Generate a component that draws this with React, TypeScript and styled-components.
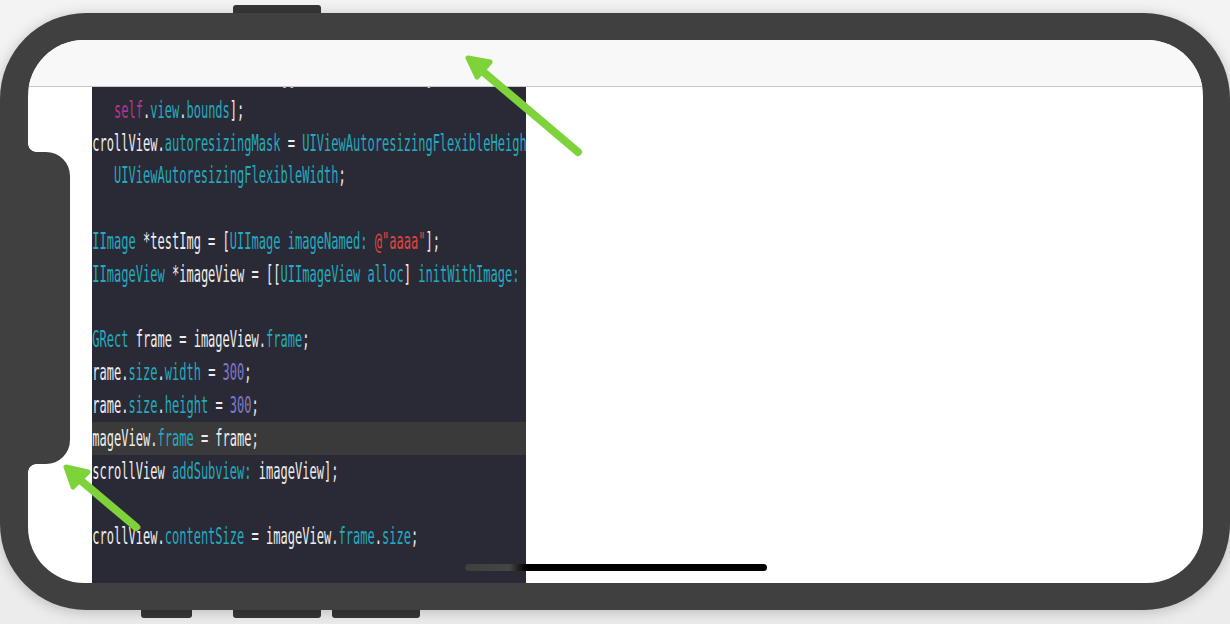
import React, { FC } from 'react'
import styled, { createGlobalStyle } from 'styled-components'

const GlobalStyle = createGlobalStyle`
  html, body {
    margin: 0;
    padding: 0;
    background: #efefef;
    font-family: 'Liberation Sans', Arial, sans-serif;
  }
`

const Stage = styled.div`
  position: relative;
  isolation: isolate;
  width: 1230px;
  height: 624px;
  padding-top: 13px;
  box-sizing: border-box;
  overflow: hidden;
  background: linear-gradient(#f3f3f3, #ececec);
`

const Phone = styled.div`
  position: relative;
  width: 1230px;
  height: 597px;
  box-sizing: border-box;
  padding: 27px 27px 27px 28px;
  background: #404040;
  border-radius: 86px;
  box-shadow: 0 2px 14px rgba(0, 0, 0, 0.22);
`

// volume / power keys peek out from behind the frame
const SideButton = styled.div<{ $left: number; $width: number; $bottom?: boolean }>`
  position: absolute;
  left: ${(p) => p.$left}px;
  width: ${(p) => p.$width}px;
  height: 12px;
  ${(p) => (p.$bottom ? 'bottom: -8px;' : 'top: -8px;')}
  background: #363636;
  border-radius: 3px;
  z-index: -1;
`

const Screen = styled.div`
  position: relative;
  height: 100%;
  display: flex;
  flex-direction: column;
  background: #ffffff;
  border-radius: 56px;
  overflow: hidden;
`

const StatusBar = styled.div`
  height: 47px;
  flex-shrink: 0;
  box-sizing: border-box;
  background: #f8f8f8;
  border-bottom: 1px solid #c6c6c6;
`

const Content = styled.div`
  flex: 1;
  display: flex;
  padding-left: 64px;
  min-height: 0;
`

const CodePanel = styled.div`
  width: 434px;
  background: #292a35;
  overflow: hidden;
`

const Lines = styled.div`
  margin-top: -26px;
  margin-left: -7px;
`

const Line = styled.div<{ $active?: boolean }>`
  height: 32.8px;
  line-height: 32.8px;
  white-space: pre;
  background: ${(p) => (p.$active ? '#3a3a3b' : 'transparent')};
`

const LineText = styled.span`
  display: inline-block;
  font-family: 'DejaVu Sans Mono', 'Liberation Mono', monospace;
  font-size: 23px;
  color: #ececec;
  transform: scaleX(0.523);
  transform-origin: 0 50%;
`

const colors: Record<string, string> = {
  p: '#ededed',
  k: '#26a9bf',
  s: '#b4378f',
  n: '#8077cc',
  r: '#e2453f',
}

const Token = styled.span<{ $kind: string }>`
  color: ${(p) => colors[p.$kind]};
`

const Notch = styled.div`
  position: absolute;
  left: 0;
  top: 112px;
  width: 42px;
  height: 312px;
  background: #404040;
  border-radius: 0 24px 24px 0;

  &::before,
  &::after {
    content: '';
    position: absolute;
    left: 0;
    width: 8px;
    height: 8px;
  }
  &::before {
    top: -8px;
    background: radial-gradient(circle at 100% 0, transparent 7.5px, #404040 8px);
  }
  &::after {
    bottom: -8px;
    background: radial-gradient(circle at 100% 100%, transparent 7.5px, #404040 8px);
  }
`

const HomeIndicator = styled.div`
  position: absolute;
  left: 437px;
  top: 524px;
  width: 302px;
  height: 7px;
  border-radius: 4px;
  background: linear-gradient(to right, #3e403e 0, #444644 45px, #000 61px);
`

const Overlay = styled.svg`
  position: absolute;
  left: 0;
  top: 0;
  pointer-events: none;
`

type Tok = [string, string]

const code: Tok[][] = [
  [['UIScrollView', 'k'], [' *scrollView = [[', 'p'], ['UIScrollView', 'k'], [' alloc', 'k'], ['] ', 'p'], ['initWithFrame:', 'k']],
  [['    ', 'p'], ['self', 's'], ['.', 'p'], ['view', 'k'], ['.', 'p'], ['bounds', 'k'], ['];', 'p']],
  [['scrollView.', 'p'], ['autoresizingMask', 'k'], [' = ', 'p'], ['UIViewAutoresizingFlexibleHeight', 'k'], [' |', 'p']],
  [['    ', 'p'], ['UIViewAutoresizingFlexibleWidth', 'k'], [';', 'p']],
  [],
  [['UIImage', 'k'], [' *testImg = [', 'p'], ['UIImage', 'k'], [' imageNamed:', 'k'], [' ', 'p'], ['@"aaaa"', 'r'], ['];', 'p']],
  [['UIImageView', 'k'], [' *imageView = [[', 'p'], ['UIImageView', 'k'], [' alloc', 'k'], ['] ', 'p'], ['initWithImage:', 'k']],
  [],
  [['CGRect', 'k'], [' frame = imageView.', 'p'], ['frame', 'k'], [';', 'p']],
  [['frame.', 'p'], ['size', 'k'], ['.', 'p'], ['width', 'k'], [' = ', 'p'], ['300', 'n'], [';', 'p']],
  [['frame.', 'p'], ['size', 'k'], ['.', 'p'], ['height', 'k'], [' = ', 'p'], ['300', 'n'], [';', 'p']],
  [['imageView.', 'p'], ['frame', 'k'], [' = frame;', 'p']],
  [['[scrollView ', 'p'], ['addSubview:', 'k'], [' imageView];', 'p']],
  [],
  [['scrollView.', 'p'], ['contentSize', 'k'], [' = imageView.', 'p'], ['frame', 'k'], ['.', 'p'], ['size', 'k'], [';', 'p']],
  [],
]

const ACTIVE_LINE = 11

const Arrow: FC<{ tail: [number, number]; head: [number, number][] }> = ({ tail, head }) => {
  const [tip] = head
  return (
    <g>
      <line x1={tail[0]} y1={tail[1]} x2={tip[0] + 6} y2={tip[1] + 6} stroke="#7ed23a" strokeWidth={8} strokeLinecap="round" />
      <polygon
        points={head.map((p) => p.join(',')).join(' ')}
        fill="#7ed23a"
        stroke="#7ed23a"
        strokeWidth={5}
        strokeLinejoin="round"
      />
    </g>
  )
}

const App: FC = () => {
  return (
    <>
      <GlobalStyle />
      <Stage>
        <Phone>
          <SideButton $left={233} $width={88} />
          <SideButton $bottom $left={141} $width={51} />
          <SideButton $bottom $left={233} $width={88} />
          <SideButton $bottom $left={332} $width={88} />
          <Screen>
            <StatusBar />
            <Content>
              <CodePanel>
                <Lines>
                  {code.map((toks, i) => (
                    <Line key={i} $active={i === ACTIVE_LINE}>
                      <LineText>
                        {toks.length === 0
                          ? ' '
                          : toks.map(([t, k], j) => (
                              <Token key={j} $kind={k}>
                                {t}
                              </Token>
                            ))}
                      </LineText>
                    </Line>
                  ))}
                </Lines>
              </CodePanel>
            </Content>
            <Notch />
            <HomeIndicator />
          </Screen>
        </Phone>
        <Overlay width={1230} height={624} viewBox="0 0 1230 624">
          <Arrow tail={[578, 152]} head={[[468, 58], [490, 62], [477, 77]]} />
          <Arrow tail={[136, 527]} head={[[66, 467], [88, 472], [73, 487]]} />
        </Overlay>
      </Stage>
    </>
  )
}

export default App
